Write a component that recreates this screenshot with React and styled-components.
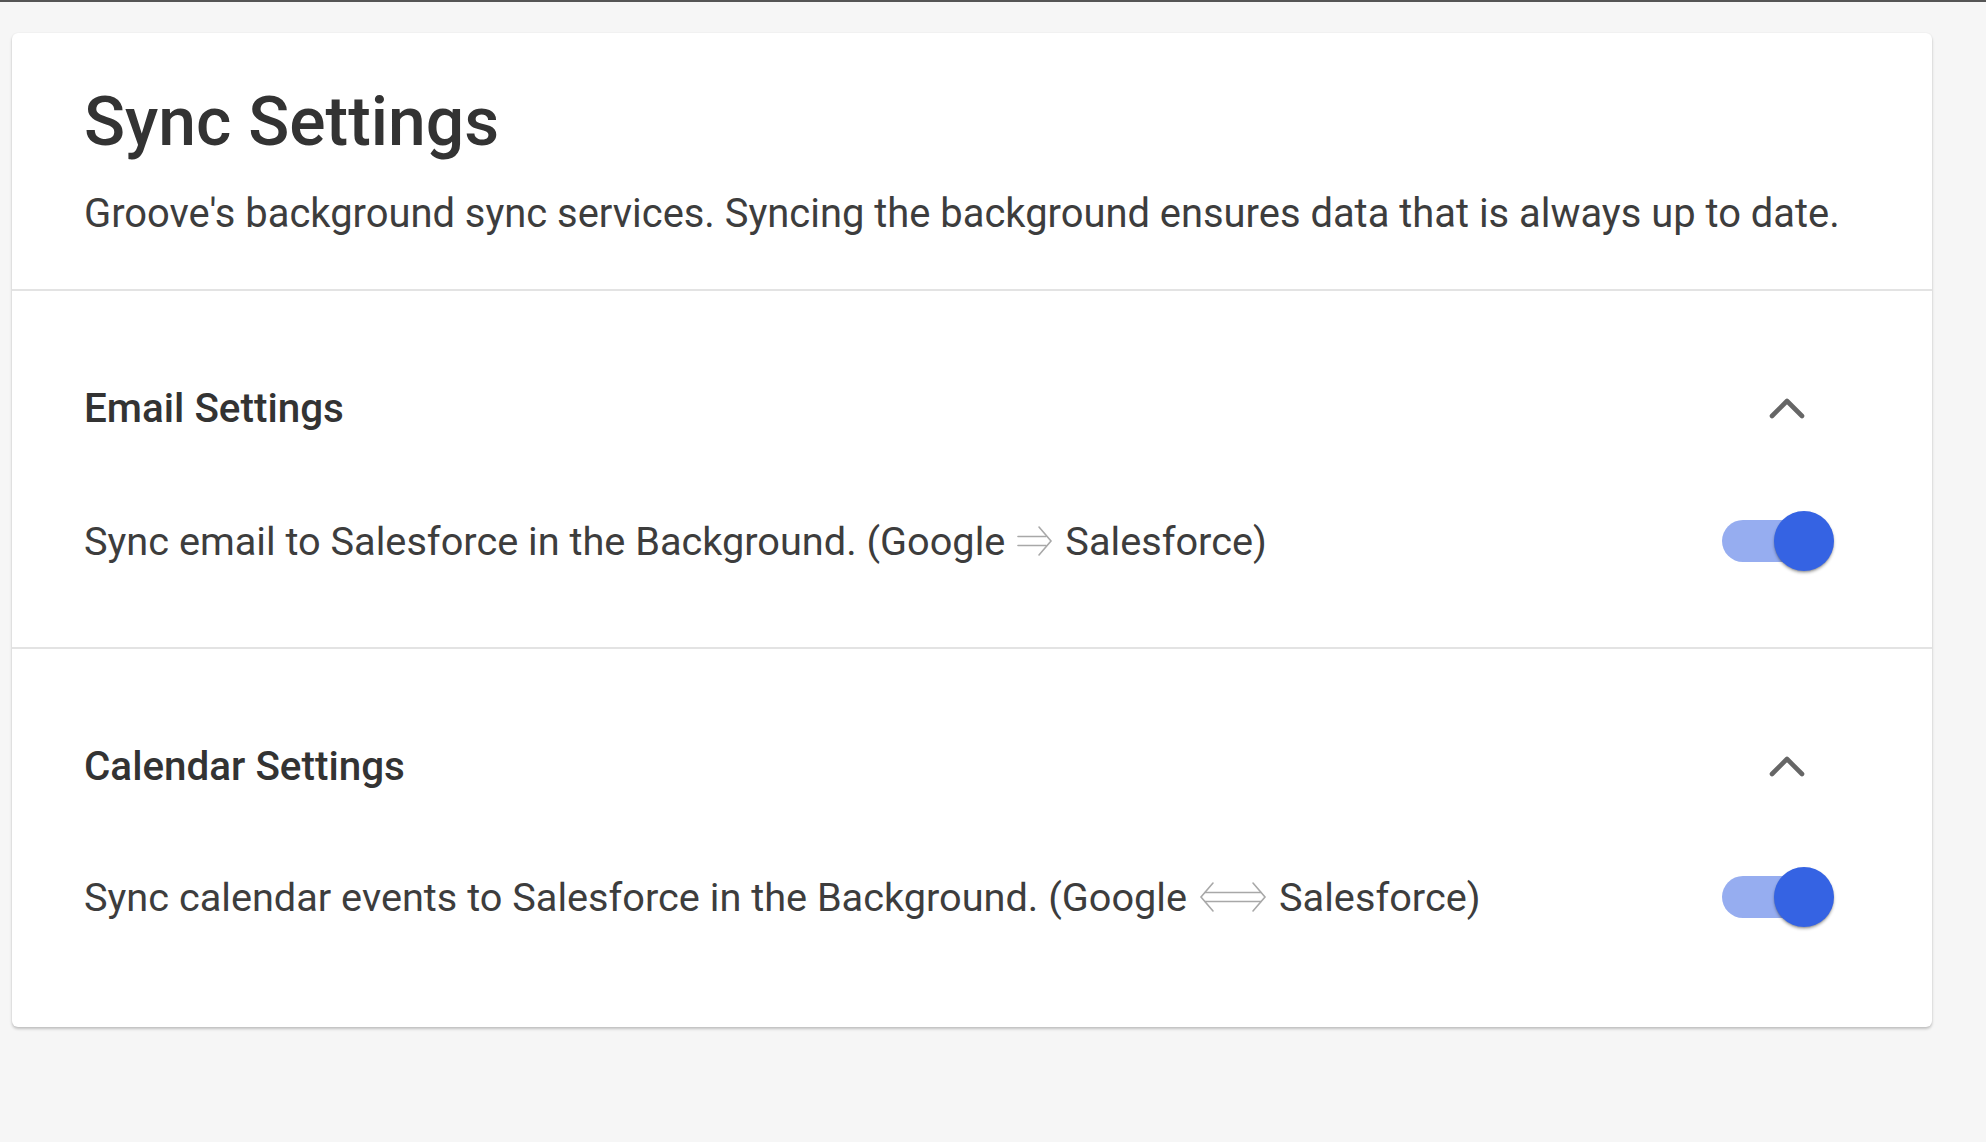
import React, { useState } from 'react'
import styled, { createGlobalStyle } from 'styled-components'

const GlobalStyle = createGlobalStyle`
    html, body {
        margin: 0;
        padding: 0;
        background: #f6f6f6;
    }
    body {
        border-top: 2px solid #555555;
        font-family: Roboto, "Liberation Sans", sans-serif;
        color: #333333;
    }
`;

const Page = styled.main`
    padding: 31px 0 80px 12px;
`;

const Card = styled.section`
    width: 1920px;
    background: #ffffff;
    border-radius: 6px;
    box-shadow: 0 2px 3px rgba(0, 0, 0, 0.22), 0 0 2px rgba(0, 0, 0, 0.06);
`;

const Header = styled.header`
    height: 256px;
    box-sizing: border-box;
    padding: 53px 72px 0 72px;
`;

const Title = styled.h1`
    margin: 0;
    font-size: 67.8px;
    line-height: 72px;
    font-weight: 500;
    color: #333333;
`;

const Subtitle = styled.p`
    margin: 33px 0 0 0;
    font-size: 39.9px;
    line-height: 46px;
    font-weight: 400;
    color: #3d3d3d;
    white-space: nowrap;
`;

const Divider = styled.hr`
    margin: 0;
    border: none;
    height: 2px;
    background: #e3e3e3;
`;

const Section = styled.div`
    padding: 87px 98px ${(props) => (props.last ? "100px" : "76px")} 72px;
`;

const SectionHeader = styled.div`
    display: flex;
    align-items: center;
    justify-content: space-between;
    height: 60px;
`;

const SectionTitle = styled.h2`
    margin: 0;
    font-size: 40.4px;
    font-weight: 500;
    color: #333333;
`;

const Collapse = styled.button`
    display: flex;
    align-items: center;
    justify-content: center;
    width: 40px;
    height: 40px;
    margin-right: 27px;
    padding: 0;
    border: none;
    background: none;
    cursor: pointer;
`;

const Row = styled.div`
    display: flex;
    align-items: center;
    justify-content: space-between;
    height: 60px;
    margin-top: ${(props) => (props.tight ? "71px" : "73px")};
`;

const RowText = styled.span`
    display: flex;
    align-items: center;
    gap: 12px;
    font-size: 39.7px;
    color: #3d3d3d;
    white-space: nowrap;
`;

const Switch = styled.button`
    position: relative;
    width: 112px;
    height: 60px;
    padding: 0;
    border: none;
    background: none;
    cursor: pointer;
`;

const Track = styled.span`
    position: absolute;
    left: 0;
    top: 9px;
    width: 102px;
    height: 42px;
    border-radius: 21px;
    background: ${(props) => (props.on ? "#96adf0" : "#c4c4c4")};
`;

const Thumb = styled.span`
    position: absolute;
    top: 0;
    left: ${(props) => (props.on ? "52px" : "0")};
    width: 60px;
    height: 60px;
    border-radius: 50%;
    background: ${(props) => (props.on ? "#3563e3" : "#fafafa")};
    box-shadow: 0 2px 3px rgba(0, 0, 0, 0.3), 0 1px 1px rgba(0, 0, 0, 0.12);
    transition: left 0.2s;
`;

function ChevronUp() {
    return (
        <svg width="36" height="22" viewBox="0 0 36 22">
            <path d="M3 19 L18 4 L33 19" fill="none" stroke="#666666" strokeWidth="4.6" strokeLinecap="round" strokeLinejoin="round" />
        </svg>
    )
}

function ArrowRight() {
    return (
        <svg width="36" height="32" viewBox="0 0 36 32">
            <g fill="none" stroke="#a8a8a8" strokeWidth="1.6" strokeLinecap="round">
                <path d="M1 11.5 H29" />
                <path d="M1 20.5 H29" />
                <path d="M22 2 L34 16 L22 30" />
            </g>
        </svg>
    )
}

function ArrowBoth() {
    return (
        <svg width="68" height="32" viewBox="0 0 68 32">
            <g fill="none" stroke="#a8a8a8" strokeWidth="1.6" strokeLinecap="round">
                <path d="M6 11.5 H62" />
                <path d="M6 20.5 H62" />
                <path d="M14 2 L2 16 L14 30" />
                <path d="M54 2 L66 16 L54 30" />
            </g>
        </svg>
    )
}

function Toggle({ defaultOn }) {
    const [on, setOn] = useState(defaultOn)
    return (
        <Switch onClick={() => setOn(!on)} aria-pressed={on}>
            <Track on={on ? 1 : 0} />
            <Thumb on={on ? 1 : 0} />
        </Switch>
    )
}

function SettingSection({ title, children, last }) {
    return (
        <Section last={last}>
            <SectionHeader>
                <SectionTitle>{title}</SectionTitle>
                <Collapse aria-label="collapse">
                    <ChevronUp />
                </Collapse>
            </SectionHeader>
            <Row tight={last}>
                <RowText>{children}</RowText>
                <Toggle defaultOn />
            </Row>
        </Section>
    )
}

export default function App() {
    return (
        <>
            <GlobalStyle />
            <Page>
                <Card>
                    <Header>
                        <Title>Sync Settings</Title>
                        <Subtitle>Groove's background sync services. Syncing the background ensures data that is always up to date.</Subtitle>
                    </Header>
                    <Divider />
                    <SettingSection title="Email Settings">
                        <span>Sync email to Salesforce in the Background. (Google</span>
                        <ArrowRight />
                        <span>Salesforce)</span>
                    </SettingSection>
                    <Divider />
                    <SettingSection title="Calendar Settings" last>
                        <span>Sync calendar events to Salesforce in the Background. (Google</span>
                        <ArrowBoth />
                        <span>Salesforce)</span>
                    </SettingSection>
                </Card>
            </Page>
        </>
    )
}
